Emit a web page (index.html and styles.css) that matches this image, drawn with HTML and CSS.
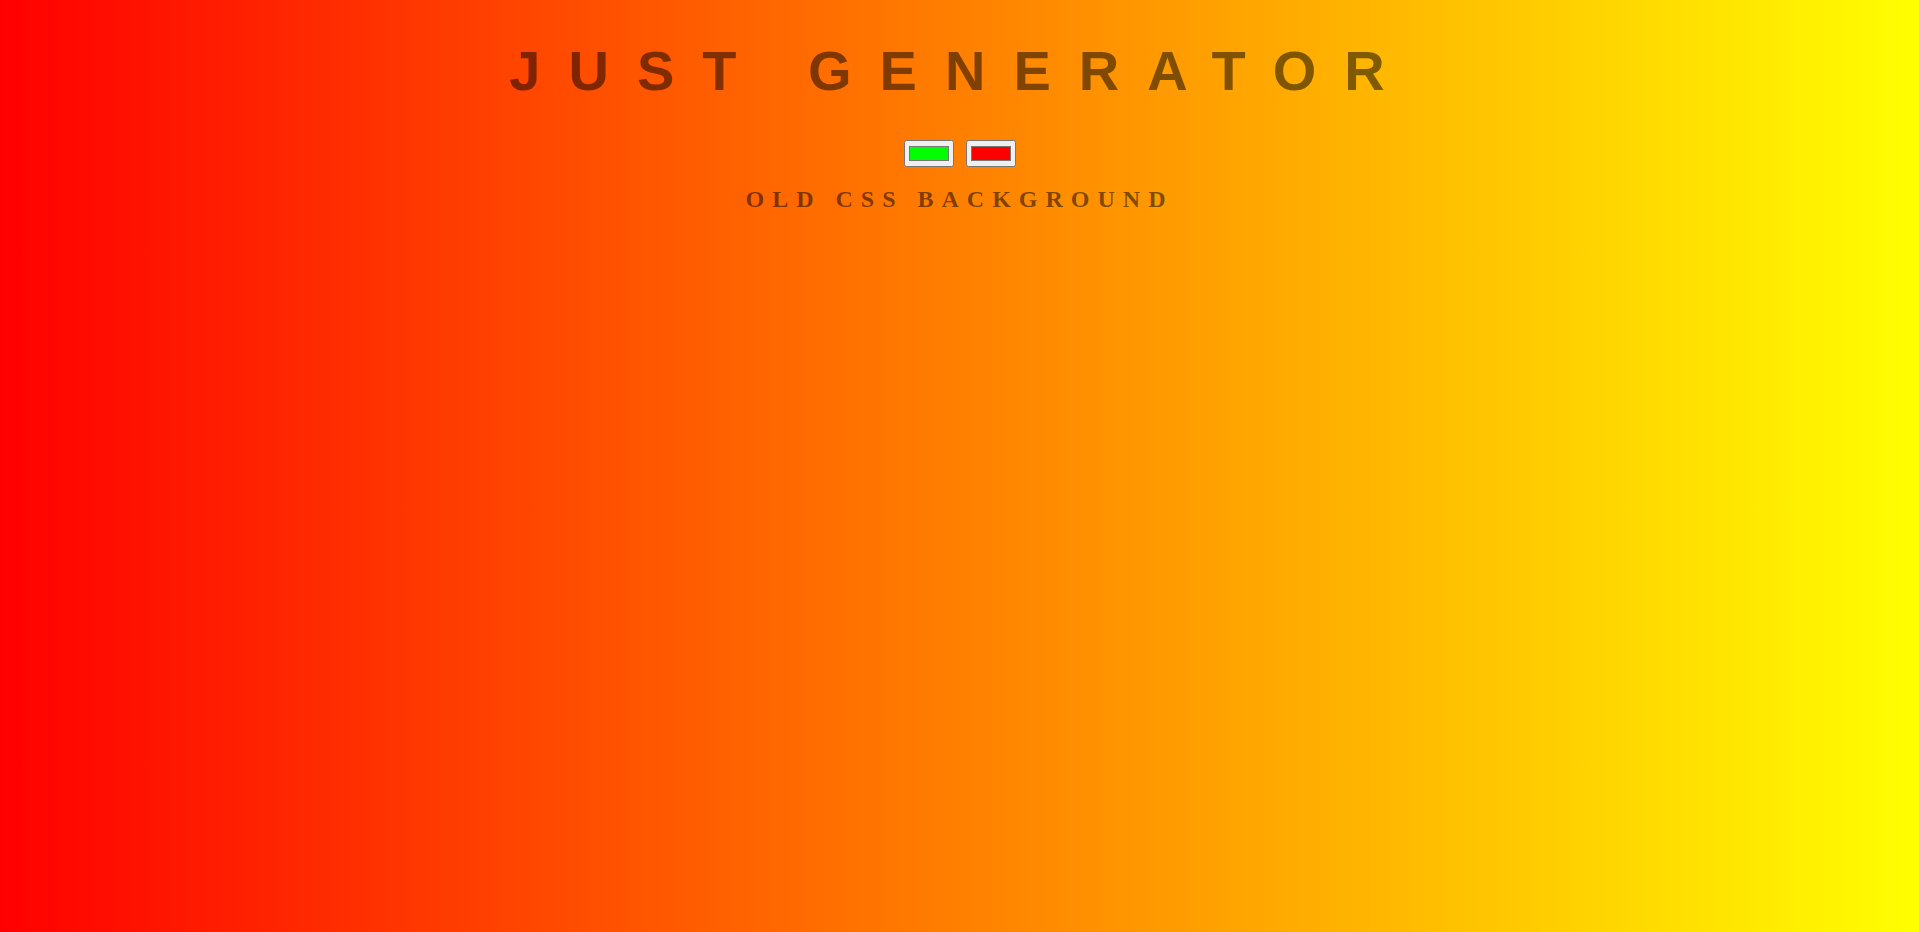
FILE: index.html
```html
<!DOCTYPE html>
<html lang="en">
<head>
<meta charset="utf-8">
<title>Just Generator</title>
<link rel="stylesheet" href="styles.css">
</head>
<body>
<main class="page">
  <h1 class="title">JUST GENERATOR</h1>
  <div class="pickers">
    <input class="picker" type="color" value="#00ff00" aria-label="Start colour">
    <input class="picker" type="color" value="#ff0000" aria-label="End colour">
  </div>
  <h2 class="subtitle">OLD CSS BACKGROUND</h2>
</main>
</body>
</html>
```

FILE: styles.css
```css
html {
  min-height: 100%;
  background: linear-gradient(to right, #ff0000, #ffff00);
}

body {
  margin: 0;
  min-height: 100vh;
}

.page {
  display: flex;
  flex-direction: column;
  align-items: center;
  padding-top: 37.5px;
}

.title {
  margin: 0 0 37.5px;
  font-family: "Liberation Sans", Arial, sans-serif;
  font-weight: bold;
  font-size: 56px;
  letter-spacing: 28px;
  line-height: normal;
  color: rgba(0, 0, 0, 0.5);
  text-align: center;
  padding-left: 3px;
}

.pickers {
  display: flex;
  justify-content: center;
  gap: 12px;
}

.picker {
  margin: 0;
}

.subtitle {
  margin: 19px 0 0;
  font-family: "Liberation Serif", "Times New Roman", serif;
  font-weight: bold;
  font-size: 24px;
  letter-spacing: 8px;
  line-height: normal;
  color: rgba(0, 0, 0, 0.5);
  text-align: center;
}
```
